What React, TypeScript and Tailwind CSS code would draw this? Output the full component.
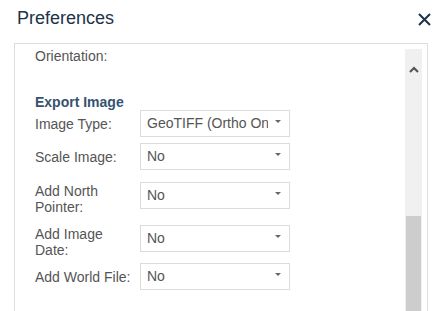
import React from "react";

function Caret() {
  return (
    <svg width="6" height="4" viewBox="0 0 6 4" className="absolute right-[8px] top-[9px]">
      <path d="M0 0 H6 L3 3 Z" fill="#666" />
    </svg>
  );
}

function Select({ value }: { value: string }) {
  return (
    <div className="relative w-[150px] h-[27px] border border-[#dcdcdc] bg-white flex items-center pl-[6px] text-[14px] text-[#555]">
      <span className="block w-[121px] overflow-hidden whitespace-nowrap">{value}</span>
      <Caret />
    </div>
  );
}

function Row({
  label,
  value,
  two,
  mt,
}: {
  label: React.ReactNode;
  value: string;
  two?: boolean;
  mt: string;
}) {
  return (
    <div className={`flex ${two ? "items-start" : "items-center"} ${mt}`}>
      <div className="w-[105px] text-[14px] leading-[16px] text-[#555] pt-[1px]">{label}</div>
      <Select value={value} />
    </div>
  );
}

export default function App() {
  return (
    <div
      className="w-[438px] h-[311px] overflow-hidden bg-white flex flex-col"
      style={{ fontFamily: '"Liberation Sans", Arial, sans-serif' }}
    >
      <div className="h-[43px] flex items-start justify-between pl-[17px] pr-[7px]">
        <div className="text-[18px] leading-[20px] mt-[8px] text-[#1c3349]">Preferences</div>
        <svg width="13" height="13" viewBox="0 0 13 13" className="mt-[13px]">
          <path d="M1 1 L12 12 M12 1 L1 12" stroke="#1c3349" strokeWidth="2" />
        </svg>
      </div>
      <div className="ml-[14px] mr-[10px] flex-1 border border-[#dedede] border-b-0 flex">
        <div className="flex-1 pl-[20px] pt-[4px]">
          <div className="text-[14px] leading-[16px] text-[#555]">Orientation:</div>
          <div className="mt-[30px] text-[14px] leading-[16px] font-bold text-[#35536f]">Export Image</div>
          <Row label="Image Type:" value="GeoTIFF (Ortho Only)" mt="mt-0" />
          <Row label="Scale Image:" value="No" mt="mt-[6px]" />
          <Row label={<>Add North<br />Pointer:</>} value="No" two mt="mt-[12px]" />
          <Row label={<>Add Image<br />Date:</>} value="No" two mt="mt-[10px]" />
          <Row label="Add World File:" value="No" mt="mt-[5px]" />
        </div>
        <div className="w-[17px] mr-[5px] mt-[5px] bg-[#f0f0f0] flex flex-col">
          <div className="h-[167px] flex justify-center pt-[17px]">
            <svg width="10" height="7" viewBox="0 0 10 7">
              <path d="M1 6 L5 2 L9 6" stroke="#555" strokeWidth="2.2" fill="none" />
            </svg>
          </div>
          <div className="flex-1 mx-[1px] bg-[#cdcdcd]" />
        </div>
      </div>
    </div>
  );
}
